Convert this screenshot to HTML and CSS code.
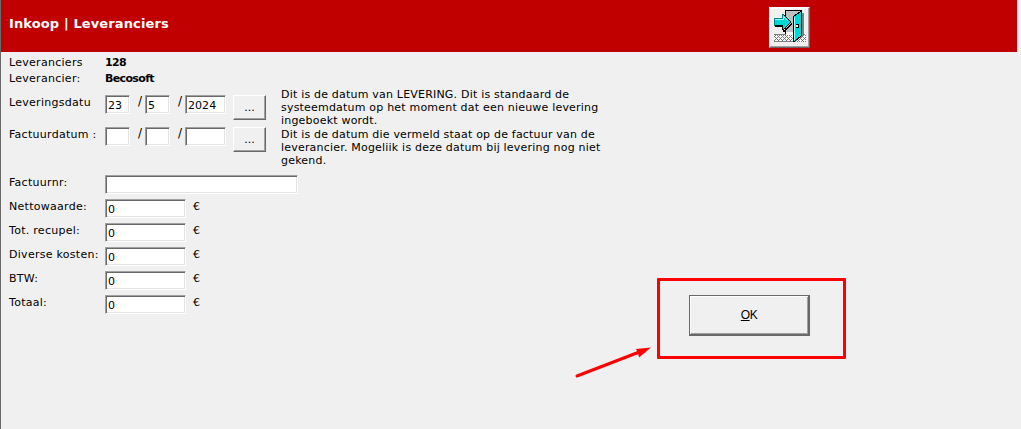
FILE: index.html
```html
<!DOCTYPE html>
<html lang="nl">
<head>
    <meta charset="UTF-8">
    <title>Inkoop | Leveranciers</title>
    <link rel="stylesheet" href="styles.css">
</head>
<body>
    <header>
        <h1>Inkoop | Leveranciers</h1>
        <button class="exit-btn" title="Sluiten">
            <svg width="35" height="35" viewBox="0 0 35 35" shape-rendering="crispEdges">
                <defs>
                    <pattern id="floor" width="4" height="4" patternUnits="userSpaceOnUse">
                        <rect width="4" height="4" fill="#fff"/>
                        <path d="M0 0h1v1h-1zM1 1h1v1h-1zM2 2h1v1h-1zM3 3h1v1h-1zM3 1h1v1h-1zM1 3h1v1h-1z" fill="#777"/>
                    </pattern>
                </defs>
                <path d="M2 24h32v8H2z" fill="url(#floor)"/>
                <path d="M2 24h12M2 31.500h20" stroke="#808080"/>
                <path d="M14 22V1h15v21" fill="#c0c0c0"/>
                <path d="M13.500 24V.500H29.500" fill="none" stroke="#000"/>
                <path d="M14 22h8v3h-8z" fill="#fff"/>
                <path d="M30 3h2v22l-8 6v-2l6-5z" fill="#808080"/>
                <path d="M21.500 6.500l7-5h1v24l-7 6h-1z" fill="#00d8d8" stroke="#000"/>
                <path d="M22.500 7v23" stroke="#9ff" fill="none"/>
                <rect x="24" y="14" width="3" height="4" fill="#000"/>
                <rect x="24" y="15" width="2" height="2" fill="#fff"/>
                <path d="M3 16h9v4l8-8v2l-8 8h-1v-5H3z" fill="#000"/>
                <path d="M2.500 8.500h8v-4h1l7.500 7.500-7.500 7.500h-1v-4h-8z" fill="#00d8d8" stroke="#000"/>
                <path d="M2.500 15.500v-7h8v-4h1" fill="none" stroke="#008090"/>
                <path d="M3 9.500h8.500v-3l5 5" fill="none" stroke="#9ff"/>
            </svg>
        </button>
    </header>

    <main>
        <form>
            <div class="row info">
                <label>Leveranciers</label><b>128</b>
            </div>
            <div class="row info">
                <label>Leverancier:</label><b>Becosoft</b>
            </div>
            <div class="dates">
                <div>
                    <div class="row date">
                        <label>Leveringsdatu</label>
                        <input class="day" type="text" value="23"><span>/</span>
                        <input class="day" type="text" value="5"><span>/</span>
                        <input class="year" type="text" value="2024">
                        <button type="button" class="pick">...</button>
                    </div>
                    <div class="row date">
                        <label>Factuurdatum :</label>
                        <input class="day" type="text"><span>/</span>
                        <input class="day" type="text"><span>/</span>
                        <input class="year" type="text">
                        <button type="button" class="pick">...</button>
                    </div>
                </div>
                <div class="help">
                    <p>Dit is de datum van LEVERING. Dit is standaard de<br>systeemdatum op het moment dat een nieuwe levering<br>ingeboekt wordt.</p>
                    <p>Dit is de datum die vermeld staat op de factuur van de<br>leverancier. Mogeliik is deze datum bij levering nog niet<br>gekend.</p>
                </div>
            </div>
            <div class="row"><label>Factuurnr:</label><input class="number" type="text"></div>
            <div class="row"><label>Nettowaarde:</label><input class="amount" type="text" value="0"><i>€</i></div>
            <div class="row"><label>Tot. recupel:</label><input class="amount" type="text" value="0"><i>€</i></div>
            <div class="row"><label>Diverse kosten:</label><input class="amount" type="text" value="0"><i>€</i></div>
            <div class="row"><label>BTW:</label><input class="amount" type="text" value="0"><i>€</i></div>
            <div class="row"><label>Totaal:</label><input class="amount" type="text" value="0"><i>€</i></div>
        </form>
        <div class="actions">
            <button class="ok"><span><u>O</u>K</span></button>
        </div>
    </main>

    <svg class="arrow" width="80" height="36" viewBox="0 0 80 36">
        <path d="M5 32L66 8.500" stroke="#f00" stroke-width="3" stroke-linecap="round"/>
        <path d="M79 3.500L67 13.500 66 9 64 5z" fill="#f00"/>
    </svg>
</body>
</html>
```

FILE: styles.css
```css
* {
    box-sizing: border-box;
}

body {
    margin: 0;
    height: 429px;
    overflow: hidden;
    position: relative;
    border-left: 1px solid #696969;
    background: #f0f0f0;
    color: #000;
    font: 11px/13px Verdana, "DejaVu Sans", sans-serif;
}

header {
    display: flex;
    align-items: flex-start;
    width: 1016px;
    height: 52px;
    padding: 7px 0 0 8px;
    background: #c00000;
}

h1 {
    width: 760px;
    margin: 8px 0 0;
    color: #fff;
    font-size: 13px;
    line-height: 17px;
    letter-spacing: 0.12px;
}

button {
    padding: 0;
    border: 1px solid;
    border-color: #fff #696969 #696969 #fff;
    background: #f0f0f0;
    box-shadow: inset -1px -1px #a0a0a0;
    color: #000;
    font: inherit;
}

.exit-btn {
    width: 41px;
    height: 41px;
    box-shadow: inset -1px -1px #a0a0a0, inset 1px 1px #fff;
}

.exit-btn svg {
    display: block;
    margin: 1px 2px;
}

main {
    display: flex;
    padding-left: 8px;
}

form {
    width: 648px;
    padding-top: 2px;
}

.row {
    display: flex;
    align-items: flex-start;
    height: 24px;
}

.row label {
    width: 96px;
    padding-top: 1px;
    letter-spacing: 0.28px;
    white-space: nowrap;
}

.info {
    height: 16px;
}

.info label,
.info b {
    padding-top: 2px;
}

.info b {
    letter-spacing: -0.65px;
}

.dates {
    display: flex;
    height: 89px;
    padding-top: 2px;
}

.dates > div:first-child {
    width: 272px;
    padding-top: 7px;
}

.date {
    height: 32px;
}

.date span {
    width: 15px;
    padding-left: 8px;
    font-size: 12px;
}

.date .pick {
    width: 33px;
    height: 25px;
    margin-left: 7px;
}

input {
    height: 19px;
    padding: 2px 0 0 2px;
    border: 1px solid;
    border-color: #a0a0a0 #fff #fff #a0a0a0;
    outline: none;
    background: #fff;
    box-shadow: inset 1px 1px #696969, inset -1px -1px #e3e3e3;
    color: #000;
    font: inherit;
    line-height: 13px;
    letter-spacing: 0.05px;
}

.day {
    width: 25px;
}

.year {
    width: 41px;
}

.number {
    width: 193px;
}

.amount {
    width: 81px;
}

.row i {
    padding: 1px 0 0 7px;
    font-style: normal;
}

.help p {
    margin: 0 0 1px;
    letter-spacing: 0.2px;
    white-space: nowrap;
}

.actions {
    width: 189px;
    height: 81px;
    margin-top: 226px;
    padding: 14px 29px;
    border: 3px solid #f00;
    border-radius: 1px;
}

.ok {
    display: block;
    width: 121px;
    height: 41px;
    border: 1px solid #696969;
    border-width: 1px 2px 2px 1px;
    box-shadow: inset 1px 1px #fff, inset -1px -1px #a0a0a0;
    font: 12px/14px "Liberation Sans", Arial, sans-serif;
    letter-spacing: -0.5px;
}

/* pointer to the OK button */
.arrow {
    position: absolute;
    left: 571px;
    top: 344px;
}
```
